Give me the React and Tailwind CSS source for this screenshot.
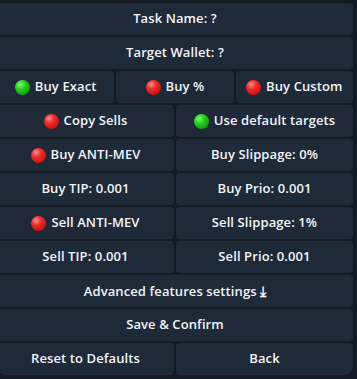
import React from 'react';

const Dot = ({ color }) => {
    const bg = color === 'green'
        ? 'bg-[radial-gradient(circle_at_35%_30%,#7dff6a_0%,#27d11c_35%,#0d9a0a_80%,#0a7a08_100%)]'
        : 'bg-[radial-gradient(circle_at_35%_30%,#ff8a8a_0%,#ee2a2a_35%,#c30f0f_80%,#9a0a0a_100%)]';
    return <span className={`inline-block w-[15px] h-[15px] rounded-full shrink-0 ${bg}`} />;
};

const Btn = ({ children, dot, className = '' }) => (
    <div className={`flex-1 h-[32px] bg-[#1f2a38] rounded-[4px] flex items-center justify-center gap-[5px] text-[13px] font-semibold text-[#f2f5f8] whitespace-nowrap tracking-[0.1px] ${className}`}>
        {dot && <Dot color={dot} />}
        <span>{children}</span>
    </div>
);

const Row = ({ children }) => <div className="flex gap-[2px]">{children}</div>;

export default function App() {
    return (
        <div className="w-[357px] h-[379px] overflow-hidden bg-[#131a23]" style={{ fontFamily: '"Open Sans", "Noto Sans", sans-serif' }}>
            <div className="ml-[-3px] w-[356px] pt-[3px] flex flex-col gap-[2px]">
                <Row><Btn>Task Name: ?</Btn></Row>
                <Row><Btn>Target Wallet: ?</Btn></Row>
                <Row>
                    <Btn dot="green">Buy Exact</Btn>
                    <Btn dot="red">Buy %</Btn>
                    <Btn dot="red">Buy Custom</Btn>
                </Row>
                <Row>
                    <Btn dot="red">Copy Sells</Btn>
                    <Btn dot="green">Use default targets</Btn>
                </Row>
                <Row>
                    <Btn dot="red">Buy ANTI-MEV</Btn>
                    <Btn>Buy Slippage: 0%</Btn>
                </Row>
                <Row>
                    <Btn>Buy TIP: 0.001</Btn>
                    <Btn>Buy Prio: 0.001</Btn>
                </Row>
                <Row>
                    <Btn dot="red">Sell ANTI-MEV</Btn>
                    <Btn>Sell Slippage: 1%</Btn>
                </Row>
                <Row>
                    <Btn>Sell TIP: 0.001</Btn>
                    <Btn>Sell Prio: 0.001</Btn>
                </Row>
                <Row><Btn>Advanced features settings <span style={{ fontFamily: '"DejaVu Sans", sans-serif' }} className="text-[14px] font-bold">⤓</span></Btn></Row>
                <Row><Btn>Save &amp; Confirm</Btn></Row>
                <Row>
                    <Btn className="rounded-bl-[9px]">Reset to Defaults</Btn>
                    <Btn className="rounded-br-[9px]">Back</Btn>
                </Row>
            </div>
        </div>
    );
}
